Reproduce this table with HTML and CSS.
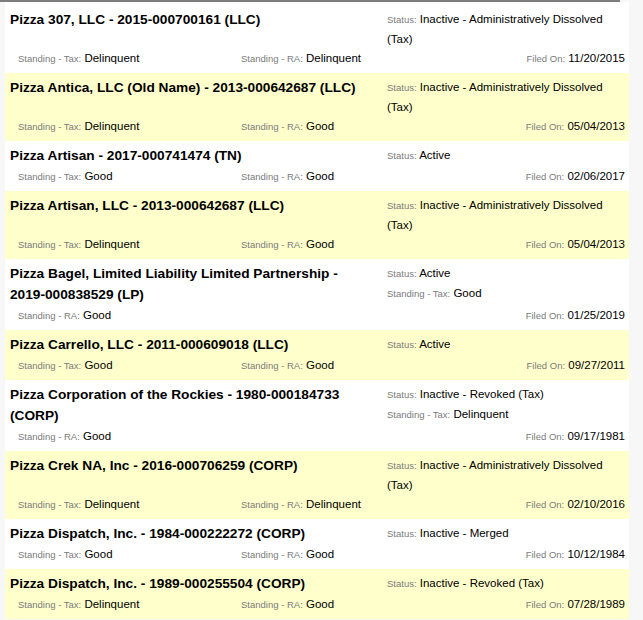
FILE: index.html
```html
<!DOCTYPE html>
<html>
<head>
<meta charset="utf-8">
<link rel="stylesheet" href="styles.css">
</head>
<body>
<div class="topline"></div>
<div class="list">
  <div class="entry">
    <div class="top">
      <div class="title">Pizza 307, LLC - 2015-000700161 (LLC)</div>
      <div class="info"><div><span class="lbl">Status:</span> <span class="val">Inactive - Administratively Dissolved (Tax)</span></div></div>
    </div>
    <div class="bottom">
      <div class="c1"><span class="lbl">Standing - Tax:</span> <span class="val">Delinquent</span></div>
      <div class="c2"><span class="lbl">Standing - RA:</span> <span class="val">Delinquent</span></div>
      <div class="c3"><span class="lbl">Filed On:</span> <span class="val">11/20/2015</span></div>
    </div>
  </div>
  <div class="entry alt">
    <div class="top">
      <div class="title">Pizza Antica, LLC (Old Name) - 2013-000642687 (LLC)</div>
      <div class="info"><div><span class="lbl">Status:</span> <span class="val">Inactive - Administratively Dissolved (Tax)</span></div></div>
    </div>
    <div class="bottom">
      <div class="c1"><span class="lbl">Standing - Tax:</span> <span class="val">Delinquent</span></div>
      <div class="c2"><span class="lbl">Standing - RA:</span> <span class="val">Good</span></div>
      <div class="c3"><span class="lbl">Filed On:</span> <span class="val">05/04/2013</span></div>
    </div>
  </div>
  <div class="entry">
    <div class="top">
      <div class="title">Pizza Artisan - 2017-000741474 (TN)</div>
      <div class="info"><div><span class="lbl">Status:</span> <span class="val">Active</span></div></div>
    </div>
    <div class="bottom">
      <div class="c1"><span class="lbl">Standing - Tax:</span> <span class="val">Good</span></div>
      <div class="c2"><span class="lbl">Standing - RA:</span> <span class="val">Good</span></div>
      <div class="c3"><span class="lbl">Filed On:</span> <span class="val">02/06/2017</span></div>
    </div>
  </div>
  <div class="entry alt">
    <div class="top">
      <div class="title">Pizza Artisan, LLC - 2013-000642687 (LLC)</div>
      <div class="info"><div><span class="lbl">Status:</span> <span class="val">Inactive - Administratively Dissolved (Tax)</span></div></div>
    </div>
    <div class="bottom">
      <div class="c1"><span class="lbl">Standing - Tax:</span> <span class="val">Delinquent</span></div>
      <div class="c2"><span class="lbl">Standing - RA:</span> <span class="val">Good</span></div>
      <div class="c3"><span class="lbl">Filed On:</span> <span class="val">05/04/2013</span></div>
    </div>
  </div>
  <div class="entry">
    <div class="top">
      <div class="title">Pizza Bagel, Limited Liability Limited Partnership - 2019-000838529 (LP)</div>
      <div class="info">
        <div><span class="lbl">Status:</span> <span class="val">Active</span></div>
        <div><span class="lbl">Standing - Tax:</span> <span class="val">Good</span></div>
      </div>
    </div>
    <div class="bottom">
      <div class="c1"><span class="lbl">Standing - RA:</span> <span class="val">Good</span></div>
      <div class="c2"></div>
      <div class="c3"><span class="lbl">Filed On:</span> <span class="val">01/25/2019</span></div>
    </div>
  </div>
  <div class="entry alt">
    <div class="top">
      <div class="title">Pizza Carrello, LLC - 2011-000609018 (LLC)</div>
      <div class="info"><div><span class="lbl">Status:</span> <span class="val">Active</span></div></div>
    </div>
    <div class="bottom">
      <div class="c1"><span class="lbl">Standing - Tax:</span> <span class="val">Good</span></div>
      <div class="c2"><span class="lbl">Standing - RA:</span> <span class="val">Good</span></div>
      <div class="c3"><span class="lbl">Filed On:</span> <span class="val">09/27/2011</span></div>
    </div>
  </div>
  <div class="entry">
    <div class="top">
      <div class="title">Pizza Corporation of the Rockies - 1980-000184733 (CORP)</div>
      <div class="info">
        <div><span class="lbl">Status:</span> <span class="val">Inactive - Revoked (Tax)</span></div>
        <div><span class="lbl">Standing - Tax:</span> <span class="val">Delinquent</span></div>
      </div>
    </div>
    <div class="bottom">
      <div class="c1"><span class="lbl">Standing - RA:</span> <span class="val">Good</span></div>
      <div class="c2"></div>
      <div class="c3"><span class="lbl">Filed On:</span> <span class="val">09/17/1981</span></div>
    </div>
  </div>
  <div class="entry alt">
    <div class="top">
      <div class="title">Pizza Crek NA, Inc - 2016-000706259 (CORP)</div>
      <div class="info"><div><span class="lbl">Status:</span> <span class="val">Inactive - Administratively Dissolved (Tax)</span></div></div>
    </div>
    <div class="bottom">
      <div class="c1"><span class="lbl">Standing - Tax:</span> <span class="val">Delinquent</span></div>
      <div class="c2"><span class="lbl">Standing - RA:</span> <span class="val">Delinquent</span></div>
      <div class="c3"><span class="lbl">Filed On:</span> <span class="val">02/10/2016</span></div>
    </div>
  </div>
  <div class="entry">
    <div class="top">
      <div class="title">Pizza Dispatch, Inc. - 1984-000222272 (CORP)</div>
      <div class="info"><div><span class="lbl">Status:</span> <span class="val">Inactive - Merged</span></div></div>
    </div>
    <div class="bottom">
      <div class="c1"><span class="lbl">Standing - Tax:</span> <span class="val">Good</span></div>
      <div class="c2"><span class="lbl">Standing - RA:</span> <span class="val">Good</span></div>
      <div class="c3"><span class="lbl">Filed On:</span> <span class="val">10/12/1984</span></div>
    </div>
  </div>
  <div class="entry alt">
    <div class="top">
      <div class="title">Pizza Dispatch, Inc. - 1989-000255504 (CORP)</div>
      <div class="info"><div><span class="lbl">Status:</span> <span class="val">Inactive - Revoked (Tax)</span></div></div>
    </div>
    <div class="bottom">
      <div class="c1"><span class="lbl">Standing - Tax:</span> <span class="val">Delinquent</span></div>
      <div class="c2"><span class="lbl">Standing - RA:</span> <span class="val">Good</span></div>
      <div class="c3"><span class="lbl">Filed On:</span> <span class="val">07/28/1989</span></div>
    </div>
  </div>
</div>
</body>
</html>
```
FILE: styles.css
```css
html, body {
  margin: 0;
  padding: 0;
  background: #f7f7f7;
}
body {
  font-family: "Liberation Sans", Arial, sans-serif;
  color: #000;
}
.topline {
  width: 620px;
  height: 2px;
  background: #7d7d7d;
}
.list {
  width: 624px;
  margin-left: 5px;
  background: #fff;
  padding-top: 3px;
}
.entry {
  padding: 4px 4px 5px 5px;
  background: #fff;
}
.entry.alt {
  background: #ffffcc;
}
.top {
  display: grid;
  grid-template-columns: 377px 1fr;
}
.title {
  font-weight: bold;
  font-size: 13.7px;
  line-height: 21px;
  padding: 0 20px 1px 0;
}
.info,
.bottom {
  font-size: 11.5px;
}
.info {
  line-height: 20px;
}
.bottom {
  line-height: 19px;
  display: grid;
  grid-template-columns: 231px 1fr auto;
}
.c1 {
  padding-left: 8px;
}
.c3 {
  text-align: right;
}
.lbl {
  font-size: 9.5px;
  line-height: 1;
  color: #7b7b7b;
}
.val {
  color: #000;
}
```
